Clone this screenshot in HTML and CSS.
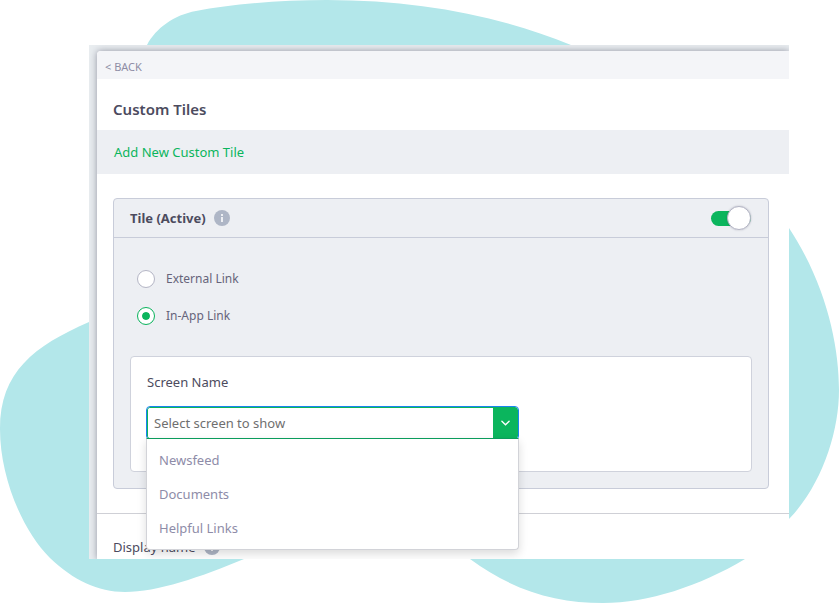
FILE: index.html
```html
<!DOCTYPE html>
<html lang="en">
<head>
  <meta charset="UTF-8">
  <meta name="viewport" content="width=device-width, initial-scale=1">
  <title>Custom Tiles</title>
  <link rel="stylesheet" href="styles.css">
</head>
<body>
  <svg class="blob" viewBox="0 0 839 604" preserveAspectRatio="none" aria-hidden="true">
    <path d="M147 45C156 28 174 15 196 11C231 4 280 0 327 0C419 0 500 16 571 45C665 84 744 153 789 228C826 284 839 345 839 390C839 432 822 485 789 519C773 535 758 549 745 559C700 586 648 603 603 603C557 603 513 591 470 559L244 559C201 577 157 592 125 592C98 592 73 580 50 558C22 530 0 477 0 429C0 372 34 346 89 322Z"/>
  </svg>

  <main class="frame">
    <div class="panel">
      <nav class="topbar"><a class="back" href="#">&lt; BACK</a></nav>
      <h1 class="title">Custom Tiles</h1>
      <div class="add-bar"><a class="add-link" href="#">Add New Custom Tile</a></div>

      <section class="tile">
        <header class="tile-head">
          <h2 class="tile-name">Tile (Active)</h2>
          <svg class="info" viewBox="0 0 16 16" aria-hidden="true">
            <circle cx="8" cy="8" r="8"/>
            <path d="M7 4h2v2H7zM7 7h2v5H7z"/>
          </svg>
          <input class="switch" type="checkbox" role="switch" aria-label="Tile active" checked>
        </header>
        <div class="tile-body">
          <div class="links">
            <label class="choice"><input type="radio" name="link">External Link</label>
            <label class="choice"><input type="radio" name="link" checked>In-App Link</label>
          </div>

          <div class="box">
            <label class="field-label" for="screen">Screen Name</label>
            <div class="combo">
              <input class="combo-input" type="text" id="screen" role="combobox" aria-expanded="true" aria-controls="screens" placeholder="Select screen to show">
              <button class="combo-btn" type="button" aria-label="Toggle list">
                <svg viewBox="0 0 10 6" aria-hidden="true"><path d="M1 1l4 4 4-4"/></svg>
              </button>
              <ul class="menu" id="screens" role="listbox">
                <li role="option">Newsfeed</li>
                <li role="option">Documents</li>
                <li role="option">Helpful Links</li>
              </ul>
            </div>
          </div>
        </div>
      </section>

      <section class="display">
        <h2 class="field-label">Display name</h2>
        <svg class="info" viewBox="0 0 16 16" aria-hidden="true">
          <circle cx="8" cy="8" r="8"/>
          <path d="M7 4h2v2H7zM7 7h2v5H7z"/>
        </svg>
      </section>
    </div>
  </main>
</body>
</html>
```

FILE: styles.css
```css
*, *::after {
  box-sizing: border-box;
}
body {
  margin: 0;
  padding: 45px 50px 45px 89px;
  height: 100vh;
  background: #fff;
  color: #4c4b5e;
  font-family: "Noto Sans", "Open Sans", sans-serif;
  font-size: 13px;
  line-height: 18px;
}
h1, h2 {
  margin: 0;
}
a {
  text-decoration: none;
}
.blob {
  position: absolute;
  top: 0;
  left: 0;
  width: 100%;
  height: 100%;
  z-index: -1;
  fill: #b3e7ea;
}

.frame {
  height: 100%;
  overflow: hidden;
  padding: 6px 0 0 8px;
  background: #e9edf0;
}
.panel {
  height: 100%;
  background: #fff;
  border-top-left-radius: 4px;
  box-shadow: 0 0 7px rgba(60, 60, 85, 0.5);
}
.topbar {
  display: flex;
  align-items: center;
  height: 28px;
  padding: 4px 8px 0;
  background: #f4f5f8;
  border-top-left-radius: 4px;
}
.back {
  color: #8e8da5;
  font-size: 11px;
}
.title {
  padding: 21px 16px 12px;
  font-size: 15px;
  font-weight: 600;
}
.add-bar {
  padding: 13px 17px;
  background: #edeff3;
}
.add-link {
  color: #0bb55d;
}

.tile {
  margin: 24px 20px 24px 16px;
  background: #edeff3;
  border: 1px solid #c8ccd9;
  border-radius: 4px;
}
.tile-head {
  display: flex;
  align-items: center;
  gap: 8px;
  height: 39px;
  padding: 0 16px;
  border-bottom: 1px solid #c8ccd9;
}
.tile-name {
  font-size: 13px;
  font-weight: 700;
}
.info {
  width: 16px;
  height: 16px;
  fill: #aeb6c6;
}
.info path {
  fill: #edeff3;
}
.switch {
  appearance: none;
  display: flex;
  align-items: center;
  justify-content: flex-end;
  width: 40px;
  height: 15px;
  margin: 0 1px 0 auto;
  border-radius: 8px;
  background: #0bb55d;
}
.switch::after {
  content: "";
  width: 24px;
  height: 24px;
  flex: none;
  background: #fff;
  border: 1px solid #b4b5c5;
  border-radius: 50%;
  box-shadow: 0 0 2px rgba(60, 60, 85, 0.3);
}

.tile-body {
  padding: 32px 16px 16px;
}
.links {
  display: grid;
  gap: 19px;
  padding: 0 7px;
  margin-bottom: 31px;
}
.choice {
  display: flex;
  align-items: center;
  gap: 11px;
  color: #66647a;
  font-size: 12px;
}
.choice input {
  appearance: none;
  width: 18px;
  height: 18px;
  margin: 0;
  background: #fff;
  border: 1px solid #b4b5c5;
  border-radius: 50%;
}
.choice input:checked {
  padding: 4px;
  border-color: #0bb55d;
  background: #0bb55d content-box;
  box-shadow: inset 0 0 0 4px #fff;
}
.box {
  height: 116px;
  padding: 16px;
  background: #fff;
  border: 1px solid #cfd2dc;
  border-radius: 4px;
}
.field-label {
  display: block;
  font-size: 13px;
  font-weight: 400;
}

.combo {
  position: relative;
  display: flex;
  max-width: 371px;
  height: 32px;
  margin-top: 16px;
  border: 1px solid #0bb55d;
  border-radius: 3px;
  outline: 1px solid #1a84ef;
}
.combo-input {
  flex: 1;
  min-width: 0;
  padding: 0 6px;
  border: 0;
  border-radius: 3px;
  outline: 0;
  background: #fff;
  color: #4c4b5e;
  font: inherit;
}
.combo-input::placeholder {
  color: #6f6f6f;
}
.combo-btn {
  display: grid;
  place-items: center;
  width: 24px;
  padding: 0;
  border: 0;
  background: #0bb55d;
}
.combo-btn svg {
  width: 9px;
  height: 6px;
  fill: none;
  stroke: #fff;
  stroke-width: 1.5;
  stroke-linecap: round;
}
.menu {
  position: absolute;
  top: 100%;
  left: -2px;
  right: -2px;
  z-index: 1;
  margin: 0;
  padding: 4px 0;
  list-style: none;
  background: #fff;
  border: 1px solid #d2d3d8;
  border-top-color: #0b9c5c;
  border-radius: 0 0 4px 4px;
  box-shadow: 0 4px 10px rgba(0, 0, 0, 0.14);
}
.menu li {
  padding: 8px 12px;
  color: #8e8ca8;
}

.display {
  display: flex;
  align-items: center;
  gap: 8px;
  padding: 24px 16px;
  border-top: 1px solid #cfd0d6;
}
```
